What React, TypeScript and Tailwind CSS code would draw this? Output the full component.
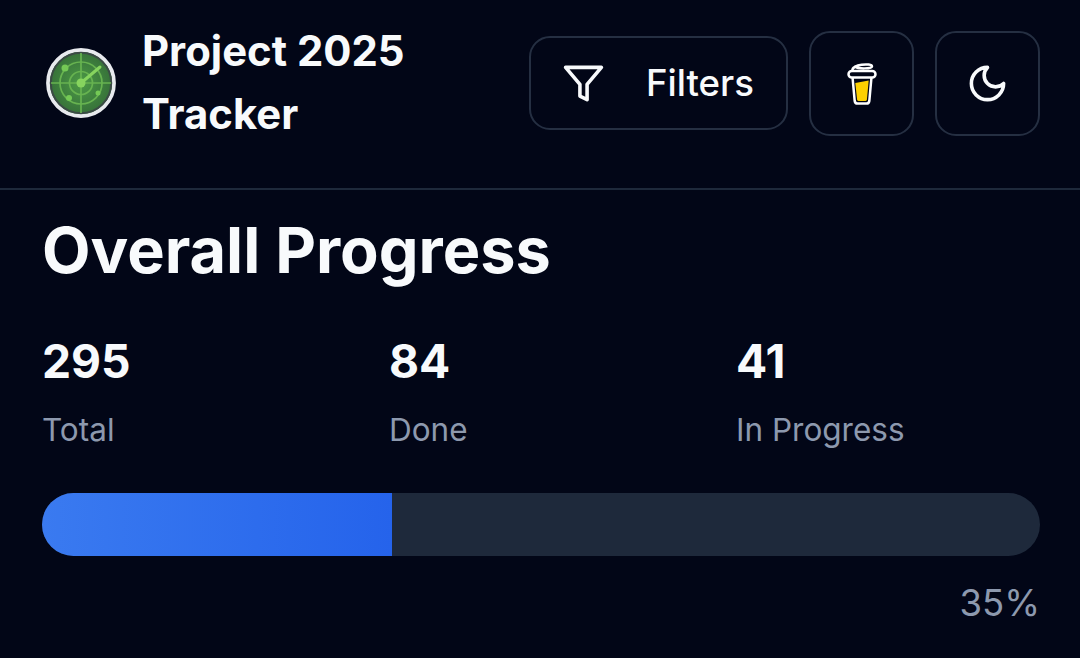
export default function App() {
  return (
    <div className="h-[658px] w-[1080px] overflow-hidden bg-[#020617] font-['Inter',sans-serif] text-[#f8fafc]">
      <header className="flex h-[190px] items-start justify-between border-b-[2px] border-[#1e293b] pl-[45px] pr-[40px] pt-[19px]">
        <div className="flex items-center gap-[25px]">
          <svg width="72" height="72" viewBox="0 0 72 72" className="mt-[2px] shrink-0">
            <defs>
              <radialGradient id="g" cx="50%" cy="50%" r="50%">
                <stop offset="0%" stopColor="#4c9a46" />
                <stop offset="100%" stopColor="#356f38" />
              </radialGradient>
            </defs>
            <circle cx="36" cy="36" r="33" fill="url(#g)" stroke="#e8eaee" strokeWidth="3.8" />
            <circle cx="36" cy="36" r="30.2" fill="none" stroke="#3b4a45" strokeWidth="2" />
            <g fill="none" stroke="#67b350" strokeWidth="1.7">
              <circle cx="36" cy="36" r="11.5" />
              <circle cx="36" cy="36" r="21" />
              <path d="M36 6v60M6 36h60" />
            </g>
            <path d="M36 36L55 20" stroke="#86d45e" strokeWidth="3" strokeLinecap="round" />
            <circle cx="36" cy="36" r="4.5" fill="#86d45e" />
            <circle cx="20" cy="21" r="3.5" fill="#74c955" />
            <circle cx="24" cy="51" r="3" fill="#74c955" />
            <circle cx="53" cy="46" r="2.5" fill="#74c955" />
          </svg>
          <h1 className="w-[290px] text-[41.85px] font-bold leading-[63px]">Project 2025 Tracker</h1>
        </div>
        <div className="mt-[12px] flex items-start gap-[21px]">
          <button className="mt-[5px] flex h-[94px] w-[259px] items-center gap-[41px] rounded-[21px] border-[2px] border-[#252f42] pl-[31px] text-[36.6px] font-medium">
            <svg width="43" height="43" viewBox="0 0 24 24" fill="none" stroke="currentColor" strokeWidth="2" strokeLinejoin="round" strokeLinecap="round" className="shrink-0">
              <polygon points="22 3 2 3 10 12.46 10 19 14 21 14 12.46 22 3" />
            </svg>
            Filters
          </button>
          <button className="flex h-[105px] w-[105px] items-center justify-center rounded-[21px] border-[2px] border-[#252f42]">
            <svg width="32" height="44" viewBox="0 0 32 44" fill="none">
              <path d="M9.3 21 L22.7 18.5 L20.9 37.5 Q20.7 39 19.2 39 H12.8 Q11.3 39 11.1 37.5 Z" fill="#fdd000" />
              <path d="M6.5 15 L8.7 39 Q9 41.5 11.5 41.5 H20.5 Q23 41.5 23.3 39 L25.5 15" stroke="#fff" strokeWidth="2.5" />
              <rect x="2.5" y="9" width="27" height="6.5" rx="3.25" fill="#020617" stroke="#fff" strokeWidth="2.5" />
              <path d="M6.5 8.5 C5 2.5 26 0.5 26 4.5 C26 6.8 12 7.2 9 4.5" stroke="#fff" strokeWidth="2.5" strokeLinecap="round" />
            </svg>
          </button>
          <button className="flex h-[105px] w-[105px] items-center justify-center rounded-[21px] border-[2px] border-[#252f42]">
            <svg width="43" height="43" viewBox="0 0 24 24" fill="none" stroke="currentColor" strokeWidth="2" strokeLinejoin="round" strokeLinecap="round">
              <path d="M12 3a6 6 0 0 0 9 9 9 9 0 1 1-9-9Z" />
            </svg>
          </button>
        </div>
      </header>
      <main className="pl-[42px] pr-[40px] pt-[20px]">
        <h2 className="text-[63px] font-bold leading-[80px]">Overall Progress</h2>
        <div className="mt-[39px] grid grid-cols-3 gap-[43px]">
          <div>
            <div className="text-[46.2px] font-bold leading-[64px]">295</div>
            <div className="mt-[15px] text-[31.5px] leading-[43px] text-[#8d99ae]">Total</div>
          </div>
          <div>
            <div className="text-[46.2px] font-bold leading-[64px]">84</div>
            <div className="mt-[15px] text-[31.5px] leading-[43px] text-[#8d99ae]">Done</div>
          </div>
          <div>
            <div className="text-[46.2px] font-bold leading-[64px]">41</div>
            <div className="mt-[15px] text-[31.5px] leading-[43px] text-[#8d99ae]">In Progress</div>
          </div>
        </div>
        <div className="mt-[42px] h-[63px] overflow-hidden rounded-full bg-[#1e293b]">
          <div className="h-full w-[35.1%] bg-gradient-to-r from-[#3a7af0] to-[#2563eb]" />
        </div>
        <div className="mt-[21px] text-right text-[36.5px] leading-[53px] text-[#8d99ae]">35%</div>
      </main>
    </div>
  );
}
